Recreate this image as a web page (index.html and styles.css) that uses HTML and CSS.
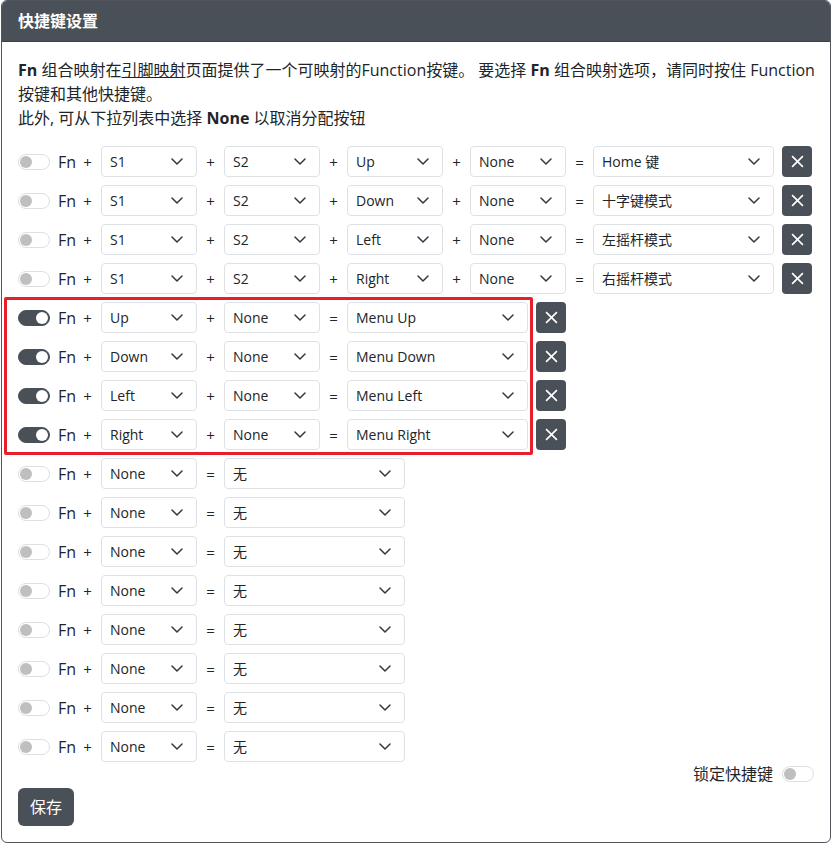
FILE: index.html
```html
<!DOCTYPE html>
<html lang="zh-CN">
<head>
    <meta charset="UTF-8">
    <meta name="viewport" content="width=device-width, initial-scale=1.0">
    <title>快捷键设置</title>
    <link rel="stylesheet" href="styles.css">
</head>
<body>
    <div class="card">
        <div class="card-header">快捷键设置</div>
        <div class="card-body">
            <p class="intro">
                <span class="line"><b>Fn</b> 组合映射在<a href="#">引脚映射</a>页面提供了一个可映射的Function按键。 要选择 <b>Fn</b> 组合映射选项，请同时按住 Function</span>
                <span class="line">按键和其他快捷键。</span>
                <span class="line">此外, 可从下拉列表中选择 <b>None</b> 以取消分配按钮</span>
            </p>

            <div class="map-row">
                <span class="switch"></span>
                <span class="fn">Fn</span><span class="op">+</span>
                <select class="pick"><option>S1</option></select><span class="op">+</span>
                <select class="pick"><option>S2</option></select><span class="op">+</span>
                <select class="pick"><option>Up</option></select><span class="op">+</span>
                <select class="pick"><option>None</option></select><span class="op">=</span>
                <select class="pick wide"><option>Home 键</option></select>
                <button class="del"><svg viewBox="0 0 12 12"><path d="M1 1L11 11M11 1L1 11"/></svg></button>
            </div>
            <div class="map-row">
                <span class="switch"></span>
                <span class="fn">Fn</span><span class="op">+</span>
                <select class="pick"><option>S1</option></select><span class="op">+</span>
                <select class="pick"><option>S2</option></select><span class="op">+</span>
                <select class="pick"><option>Down</option></select><span class="op">+</span>
                <select class="pick"><option>None</option></select><span class="op">=</span>
                <select class="pick wide"><option>十字键模式</option></select>
                <button class="del"><svg viewBox="0 0 12 12"><path d="M1 1L11 11M11 1L1 11"/></svg></button>
            </div>
            <div class="map-row">
                <span class="switch"></span>
                <span class="fn">Fn</span><span class="op">+</span>
                <select class="pick"><option>S1</option></select><span class="op">+</span>
                <select class="pick"><option>S2</option></select><span class="op">+</span>
                <select class="pick"><option>Left</option></select><span class="op">+</span>
                <select class="pick"><option>None</option></select><span class="op">=</span>
                <select class="pick wide"><option>左摇杆模式</option></select>
                <button class="del"><svg viewBox="0 0 12 12"><path d="M1 1L11 11M11 1L1 11"/></svg></button>
            </div>
            <div class="map-row">
                <span class="switch"></span>
                <span class="fn">Fn</span><span class="op">+</span>
                <select class="pick"><option>S1</option></select><span class="op">+</span>
                <select class="pick"><option>S2</option></select><span class="op">+</span>
                <select class="pick"><option>Right</option></select><span class="op">+</span>
                <select class="pick"><option>None</option></select><span class="op">=</span>
                <select class="pick wide"><option>右摇杆模式</option></select>
                <button class="del"><svg viewBox="0 0 12 12"><path d="M1 1L11 11M11 1L1 11"/></svg></button>
            </div>

            <!-- highlighted menu shortcuts -->
            <div class="focus-group">
                <div class="map-row">
                    <span class="switch on"></span>
                    <span class="fn">Fn</span><span class="op">+</span>
                    <select class="pick"><option>Up</option></select><span class="op">+</span>
                    <select class="pick"><option>None</option></select><span class="op">=</span>
                    <select class="pick wide"><option>Menu Up</option></select>
                    <button class="del"><svg viewBox="0 0 12 12"><path d="M1 1L11 11M11 1L1 11"/></svg></button>
                </div>
                <div class="map-row">
                    <span class="switch on"></span>
                    <span class="fn">Fn</span><span class="op">+</span>
                    <select class="pick"><option>Down</option></select><span class="op">+</span>
                    <select class="pick"><option>None</option></select><span class="op">=</span>
                    <select class="pick wide"><option>Menu Down</option></select>
                    <button class="del"><svg viewBox="0 0 12 12"><path d="M1 1L11 11M11 1L1 11"/></svg></button>
                </div>
                <div class="map-row">
                    <span class="switch on"></span>
                    <span class="fn">Fn</span><span class="op">+</span>
                    <select class="pick"><option>Left</option></select><span class="op">+</span>
                    <select class="pick"><option>None</option></select><span class="op">=</span>
                    <select class="pick wide"><option>Menu Left</option></select>
                    <button class="del"><svg viewBox="0 0 12 12"><path d="M1 1L11 11M11 1L1 11"/></svg></button>
                </div>
                <div class="map-row">
                    <span class="switch on"></span>
                    <span class="fn">Fn</span><span class="op">+</span>
                    <select class="pick"><option>Right</option></select><span class="op">+</span>
                    <select class="pick"><option>None</option></select><span class="op">=</span>
                    <select class="pick wide"><option>Menu Right</option></select>
                    <button class="del"><svg viewBox="0 0 12 12"><path d="M1 1L11 11M11 1L1 11"/></svg></button>
                </div>
            </div>

            <div class="map-row">
                <span class="switch"></span>
                <span class="fn">Fn</span><span class="op">+</span>
                <select class="pick"><option>None</option></select><span class="op">=</span>
                <select class="pick wide"><option>无</option></select>
            </div>
            <div class="map-row">
                <span class="switch"></span>
                <span class="fn">Fn</span><span class="op">+</span>
                <select class="pick"><option>None</option></select><span class="op">=</span>
                <select class="pick wide"><option>无</option></select>
            </div>
            <div class="map-row">
                <span class="switch"></span>
                <span class="fn">Fn</span><span class="op">+</span>
                <select class="pick"><option>None</option></select><span class="op">=</span>
                <select class="pick wide"><option>无</option></select>
            </div>
            <div class="map-row">
                <span class="switch"></span>
                <span class="fn">Fn</span><span class="op">+</span>
                <select class="pick"><option>None</option></select><span class="op">=</span>
                <select class="pick wide"><option>无</option></select>
            </div>
            <div class="map-row">
                <span class="switch"></span>
                <span class="fn">Fn</span><span class="op">+</span>
                <select class="pick"><option>None</option></select><span class="op">=</span>
                <select class="pick wide"><option>无</option></select>
            </div>
            <div class="map-row">
                <span class="switch"></span>
                <span class="fn">Fn</span><span class="op">+</span>
                <select class="pick"><option>None</option></select><span class="op">=</span>
                <select class="pick wide"><option>无</option></select>
            </div>
            <div class="map-row">
                <span class="switch"></span>
                <span class="fn">Fn</span><span class="op">+</span>
                <select class="pick"><option>None</option></select><span class="op">=</span>
                <select class="pick wide"><option>无</option></select>
            </div>
            <div class="map-row">
                <span class="switch"></span>
                <span class="fn">Fn</span><span class="op">+</span>
                <select class="pick"><option>None</option></select><span class="op">=</span>
                <select class="pick wide"><option>无</option></select>
            </div>

            <div class="lock-row">
                <span>锁定快捷键</span>
                <span class="switch"></span>
            </div>

            <button class="save-btn">保存</button>
        </div>
    </div>
</body>
</html>
```

FILE: styles.css
```css
* {
    margin: 0;
    padding: 0;
    box-sizing: border-box;
}
body {
    font-family: "Open Sans", "Noto Sans CJK SC", sans-serif;
    font-size: 16px;
    line-height: 24px;
    color: #212529;
    background: #fff;
}
.card {
    margin-left: 1px;
    width: 830px;
    height: 843px;
    border: 1px solid #50565c;
    border-radius: 6px;
    overflow: hidden;
}
.card-header {
    background: #495057;
    color: #fff;
    font-weight: bold;
    padding: 8px 16px;
    border-bottom: 1px solid #3d4248;
}
.card-body {
    padding: 16px;
}
.intro {
    font-size: 16px;
    line-height: 24px;
    margin-bottom: 16px;
}
.intro .line {
    display: block;
    white-space: nowrap;
}
.intro a {
    color: #212529;
    text-decoration: underline;
}
.map-row {
    display: flex;
    align-items: center;
    height: 31px;
    margin-bottom: 8px;
}
.switch {
    position: relative;
    flex: none;
    width: 32px;
    height: 16px;
    border: 1px solid #dcdfe3;
    border-radius: 8px;
    background: #fff;
    margin-right: 8px;
}
.switch::after {
    content: "";
    position: absolute;
    top: 1px;
    left: 1px;
    width: 12px;
    height: 12px;
    border-radius: 50%;
    background: #bfbfbf;
}
.switch.on {
    background: #495057;
    border-color: #495057;
}
.switch.on::after {
    left: 17px;
    background: #fff;
}
.fn {
    width: 16px;
    font-size: 16px;
}
.op {
    width: 27px;
    text-align: center;
    font-size: 15px;
}
.pick {
    appearance: none;
    -webkit-appearance: none;
    width: 96px;
    height: 31px;
    padding: 0 30px 0 8px;
    font-family: inherit;
    font-size: 14px;
    color: #212529;
    background-color: #fff;
    background-image: url("data:image/svg+xml,%3csvg xmlns='http://www.w3.org/2000/svg' viewBox='0 0 12 7'%3e%3cpath fill='none' stroke='%23343a40' stroke-width='1.5' stroke-linecap='round' stroke-linejoin='round' d='M1 1l5 5 5-5'/%3e%3c/svg%3e");
    background-repeat: no-repeat;
    background-size: 12px 7px;
    background-position: right 13px center;
    border: 1px solid #dee2e6;
    border-radius: 4px;
}
.pick.wide {
    width: 181px;
}
.del {
    width: 30px;
    height: 31px;
    margin-left: 8px;
    border: none;
    border-radius: 4px;
    background: #495057;
    display: flex;
    align-items: center;
    justify-content: center;
}
.del svg {
    width: 13px;
    height: 13px;
    fill: none;
    stroke: #fff;
    stroke-width: 1.5;
}
.focus-group {
    position: relative;
}
/* red annotation frame around the menu rows */
.focus-group::after {
    content: "";
    box-sizing: border-box;
    position: absolute;
    top: -5px;
    left: -14px;
    width: 529px;
    height: 158px;
    border: 3px solid #e5202a;
    border-radius: 2px;
    pointer-events: none;
}
.lock-row {
    display: flex;
    justify-content: flex-end;
    align-items: center;
    gap: 9px;
    margin-top: -8px;
    height: 24px;
}
.lock-row .switch {
    margin-right: 0;
}
.save-btn {
    margin-top: 2px;
    background: #495057;
    color: #fff;
    border: none;
    border-radius: 6px;
    padding: 7px 12px;
    font-family: inherit;
    font-size: 16px;
    line-height: 24px;
}
```
